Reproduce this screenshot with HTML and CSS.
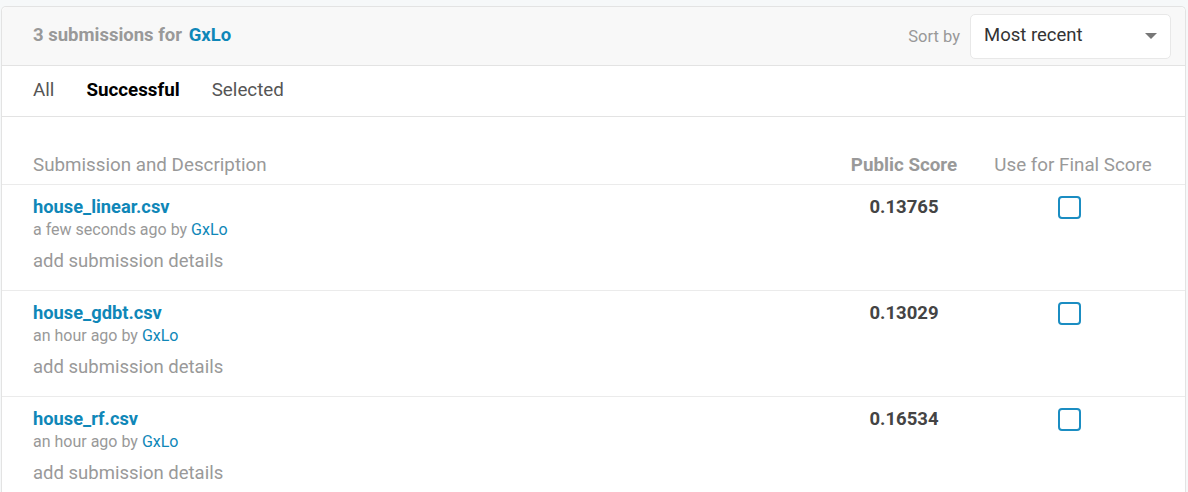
FILE: index.html
```html
<!DOCTYPE html>
<html lang="en">
  <head>
    <meta charset="UTF-8" />
    <title>Submissions</title>
    <link rel="stylesheet" href="styles.css">
  </head>
  <body>
    <div class="card">
      <div class="card-head">
        <h2 class="title">3 submissions for <a href="#">GxLo</a></h2>
        <div class="sort">
          <span class="sort-label">Sort by</span>
          <div class="select">
            <span>Most recent</span>
            <span class="caret"></span>
          </div>
        </div>
      </div>
      <nav class="tabs">
        <a href="#">All</a>
        <a href="#" class="active">Successful</a>
        <a href="#">Selected</a>
      </nav>
      <div class="table">
        <div class="row head">
          <div>Submission and Description</div>
          <div class="score">Public Score</div>
          <div class="final">Use for Final Score</div>
        </div>
        <div class="row">
          <div>
            <a class="name" href="#">house_linear.csv</a>
            <div class="meta">a few seconds ago by <a href="#">GxLo</a></div>
            <div class="details">add submission details</div>
          </div>
          <div class="score value">0.13765</div>
          <div class="final"><span class="check"></span></div>
        </div>
        <div class="row">
          <div>
            <a class="name" href="#">house_gdbt.csv</a>
            <div class="meta">an hour ago by <a href="#">GxLo</a></div>
            <div class="details">add submission details</div>
          </div>
          <div class="score value">0.13029</div>
          <div class="final"><span class="check"></span></div>
        </div>
        <div class="row">
          <div>
            <a class="name" href="#">house_rf.csv</a>
            <div class="meta">an hour ago by <a href="#">GxLo</a></div>
            <div class="details">add submission details</div>
          </div>
          <div class="score value">0.16534</div>
          <div class="final"><span class="check"></span></div>
        </div>
      </div>
    </div>
  </body>
</html>
```

FILE: styles.css
```css
:root {
  --link-color: #0f87b8;
  --gray-text: #999;
  --border-color: #e3e3e3;
  --font-family: Roboto, "Liberation Sans", sans-serif;
}
* {
  margin: 0;
  padding: 0;
  box-sizing: border-box;
}
body {
  background-color: #f6f8f9;
  font-family: var(--font-family);
  color: #333;
  padding: 6px 2px 0 1px;
}
a {
  color: var(--link-color);
  text-decoration: none;
}
.card {
  background-color: #fff;
  border: 1px solid var(--border-color);
  border-bottom: none;
  border-radius: 5px 5px 0 0;
}
.card-head {
  height: 59px;
  background-color: #f8f8f8;
  border-bottom: 1px solid var(--border-color);
  border-radius: 5px 5px 0 0;
  display: flex;
  align-items: center;
  justify-content: space-between;
  padding: 0 14px 0 31px;
}
.title {
  font-size: 18.5px;
  font-weight: 700;
  color: var(--gray-text);
  margin-bottom: 3px;
}
.title a {
  margin-left: 2px;
}
.sort {
  display: flex;
  align-items: center;
  gap: 10px;
}
.sort-label {
  font-size: 16.5px;
  color: var(--gray-text);
}
.select {
  width: 201px;
  height: 45px;
  background-color: #fff;
  border: 1px solid #e8e8e8;
  border-radius: 5px;
  display: flex;
  align-items: center;
  justify-content: space-between;
  padding: 0 13px 3px 13px;
  font-size: 18.5px;
  color: #333;
}
.caret {
  width: 0;
  height: 0;
  border-left: 6px solid transparent;
  border-right: 6px solid transparent;
  border-top: 6px solid #777;
  margin-top: 3px;
}
.tabs {
  height: 51px;
  border-bottom: 1px solid var(--border-color);
  display: flex;
  align-items: center;
  gap: 32px;
  padding: 0 31px 2px;
}
.tabs a {
  font-size: 18.8px;
  color: #555;
}
.tabs a.active {
  color: #000;
  font-weight: 700;
}
.table {
  padding-top: 30px;
}
.row {
  display: grid;
  grid-template-columns: 1fr 108px 158px;
  column-gap: 36px;
  padding: 10px 33px 0 31px;
  height: 106px;
  border-bottom: 1px solid #ebebeb;
}
.row.head {
  height: 38px;
  padding-top: 7px;
  font-size: 18.8px;
  color: var(--gray-text);
}
.row.head .score {
  font-weight: 700;
}
.score {
  text-align: center;
}
.final {
  text-align: center;
}
.name {
  display: block;
  font-size: 18.3px;
  font-weight: 700;
  line-height: 24px;
}
.meta {
  font-size: 16px;
  color: var(--gray-text);
  line-height: 20px;
  margin-top: 1px;
}
.details {
  font-size: 18.5px;
  color: var(--gray-text);
  line-height: 22px;
  margin-top: 10px;
}
.value {
  font-size: 18.5px;
  font-weight: 700;
  color: #444;
  line-height: 24px;
}
.check {
  display: inline-block;
  width: 23px;
  height: 23px;
  border: 2px solid #1b8dc2;
  border-radius: 4px;
  margin-top: 1px;
  margin-right: 8px;
}
```
